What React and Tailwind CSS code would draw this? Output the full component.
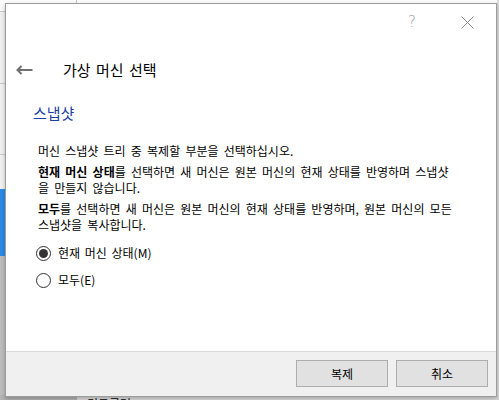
import React from "react";

const font = { fontFamily: '"Noto Sans CJK KR", "Noto Sans", sans-serif' };

function Radio({ checked, label }) {
  return (
    <div className="flex items-center h-[20px]">
      <span className="w-[15px] h-[15px] rounded-full border border-[#333333] bg-white flex items-center justify-center">
        {checked && <span className="w-[9px] h-[9px] rounded-full bg-[#333333]" />}
      </span>
      <span className="ml-[7px] text-[12px] text-black [word-spacing:2px]">{label}</span>
    </div>
  );
}

export default function App() {
  return (
    <div className="relative w-[499px] h-[400px] overflow-hidden bg-[#f0f0f0]" style={font}>
      {/* background app */}
      <div className="absolute left-0 top-0 w-[499px] h-[12px] bg-[#fbfbfb] border-b border-[#c8c8c8]" />
      <div className="absolute left-[76px] top-0 w-px h-[12px] bg-[#c8c8c8]" />
      <div className="absolute left-0 top-[83px] w-[6px] h-px bg-[#c8c8c8]" />
      <div className="absolute left-0 top-[154px] w-[6px] h-px bg-[#c8c8c8]" />
      <div className="absolute left-0 top-[189px] w-[6px] h-[67px] bg-[#2a8ae6]" />
      <div className="absolute left-0 top-[256px] w-[6px] h-[144px] bg-[#bdbdbd]" />
      <div className="absolute left-0 top-[395px] w-[77px] h-[5px] bg-[#b4b4b4]" />
      <div className="absolute left-[77px] top-[395px] w-[422px] h-[5px] bg-[#dedede]" />
      <div className="absolute left-[87px] top-[396px] text-[12px] leading-[16px] text-black whitespace-nowrap">컨트롤러: SATA</div>
      <div className="absolute left-[497px] top-0 w-[2px] h-[400px] bg-[#d8d8d8]" />

      {/* dialog */}
      <div className="absolute left-[5px] top-[3px] w-[492px] h-[394px] border border-[#9c9c9c] bg-white flex flex-col shadow-[0_2px_4px_rgba(0,0,0,0.25)]">
        <div className="h-[44px] flex items-start pt-[10px] justify-end pr-[22px]">
          <span className="text-[15px] leading-[16px] text-[#9a9a9a] mr-[45px]" style={{ fontFamily: '"DejaVu Sans", sans-serif', fontWeight: 300 }}>?</span>
          <svg width="13" height="13" viewBox="0 0 13 13" className="mt-[2px]">
            <path d="M0.5 0.5 L12.5 12.5 M12.5 0.5 L0.5 12.5" stroke="#8a8a8a" strokeWidth="1" fill="none" />
          </svg>
        </div>
        <div className="h-[44px] flex items-center pl-[10px]">
          <svg width="17" height="10" viewBox="0 0 17 10">
            <path d="M1.5 5 H16.5 M5.5 1 L1.5 5 L5.5 9" stroke="#707070" strokeWidth="2" fill="none" />
          </svg>
          <span className="ml-[30px] text-[15px] leading-[20px] text-black [word-spacing:2px]">가상 머신 선택</span>
        </div>
        <div className="flex-1 flex flex-col">
          <div className="mt-[11px] pl-[27px] text-[15px] leading-[20px] text-[#1b3fa0]">스냅샷</div>
          <div className="mt-[20px] pl-[32px] text-[12px] leading-[16px] text-black [word-spacing:2.5px] whitespace-nowrap">
            <p className="mb-[5px]">머신 스냅샷 트리 중 복제할 부분을 선택하십시오.</p>
            <p className="mb-[5px]">
              <b>현재 머신 상태</b>를 선택하면 새 머신은 원본 머신의 현재 상태를 반영하며 스냅샷
              <br />을 만들지 않습니다.
            </p>
            <p>
              <b>모두</b>를 선택하면 새 머신은 원본 머신의 현재 상태를 반영하며, 원본 머신의 모든
              <br />스냅샷을 복사합니다.
            </p>
          </div>
          <div className="mt-[10px] pl-[30px] flex flex-col gap-[7px]">
            <Radio checked label="현재 머신 상태(M)" />
            <Radio label="모두(E)" />
          </div>
        </div>
        <div className="h-[45px] border-t border-[#dadada] bg-[#f0f0f0] flex justify-end items-start pt-[8px] pr-[8px] gap-[8px]">
          <button className="w-[92px] h-[27px] bg-[#e1e1e1] border border-[#adadad] text-[12px] text-black">복제</button>
          <button className="w-[92px] h-[27px] bg-[#e1e1e1] border border-[#adadad] text-[12px] text-black">취소</button>
        </div>
      </div>
    </div>
  );
}
